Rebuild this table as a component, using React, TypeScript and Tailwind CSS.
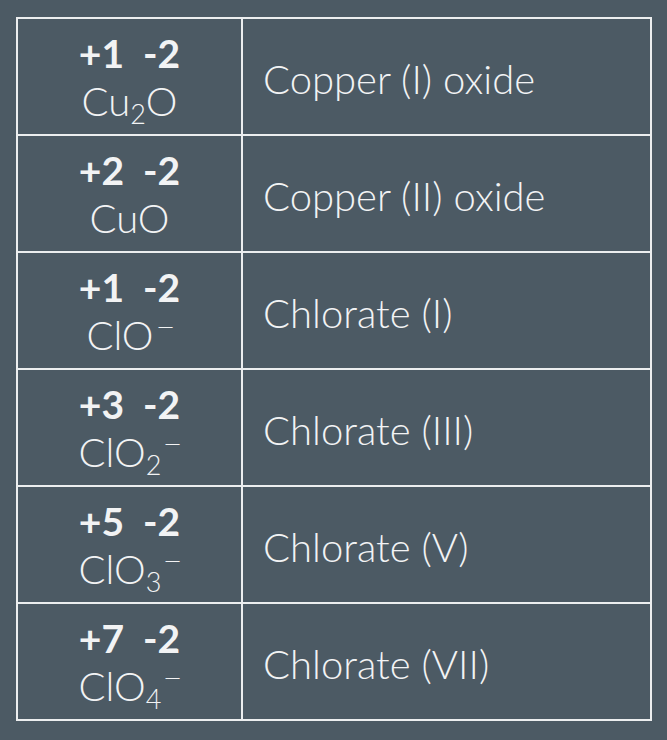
const ROWS: { ox: string; formula: React.ReactNode; name: string }[] = [
  { ox: "+1", formula: <>Cu<sub className="sub">2</sub>O</>, name: "Copper (I) oxide" },
  { ox: "+2", formula: <>CuO</>, name: "Copper (II) oxide" },
  { ox: "+1", formula: <>ClO<sup className="sup">−</sup></>, name: "Chlorate (I)" },
  { ox: "+3", formula: <>ClO<sub className="sub">2</sub><sup className="sup">−</sup></>, name: "Chlorate (III)" },
  { ox: "+5", formula: <>ClO<sub className="sub">3</sub><sup className="sup">−</sup></>, name: "Chlorate (V)" },
  { ox: "+7", formula: <>ClO<sub className="sub">4</sub><sup className="sup">−</sup></>, name: "Chlorate (VII)" },
];

function Formula({ children }: { children: React.ReactNode }) {
  return (
    <div className="text-[40px] font-light leading-[49px] [&_.sub]:relative [&_.sub]:top-[8px] [&_.sub]:align-baseline [&_.sub]:text-[27px] [&_.sub]:leading-none [&_.sup]:relative [&_.sup]:-top-[14px] [&_.sup]:ml-[4px] [&_.sup]:inline-block [&_.sup]:scale-x-[1.3] [&_.sup]:align-baseline [&_.sup]:text-[26px] [&_.sup]:leading-none">
      {children}
    </div>
  );
}

export default function App() {
  return (
    <div className="h-[740px] w-[667px] bg-[#4c5a64] pl-[16px] pt-[17px] font-['Lato','Liberation_Sans',sans-serif] text-[#f2f3f4]">
      <div className="flex w-[636px] flex-col divide-y-2 divide-[#eceeef] border-2 border-[#eceeef]">
        {ROWS.map((row, i) => (
          <div key={i} className="flex h-[117px] last:h-[115px]">
            <div className="flex w-[225px] flex-col items-center border-r-2 border-[#eceeef] pt-[10px]">
              <div className="whitespace-pre text-[39px] font-bold leading-[48px]">
                {row.ox}  -2
              </div>
              <Formula>{row.formula}</Formula>
            </div>
            <div className="flex flex-1 items-center pl-[20px] pt-[5px] text-[40px] font-light">
              {row.name}
            </div>
          </div>
        ))}
      </div>
    </div>
  );
}
